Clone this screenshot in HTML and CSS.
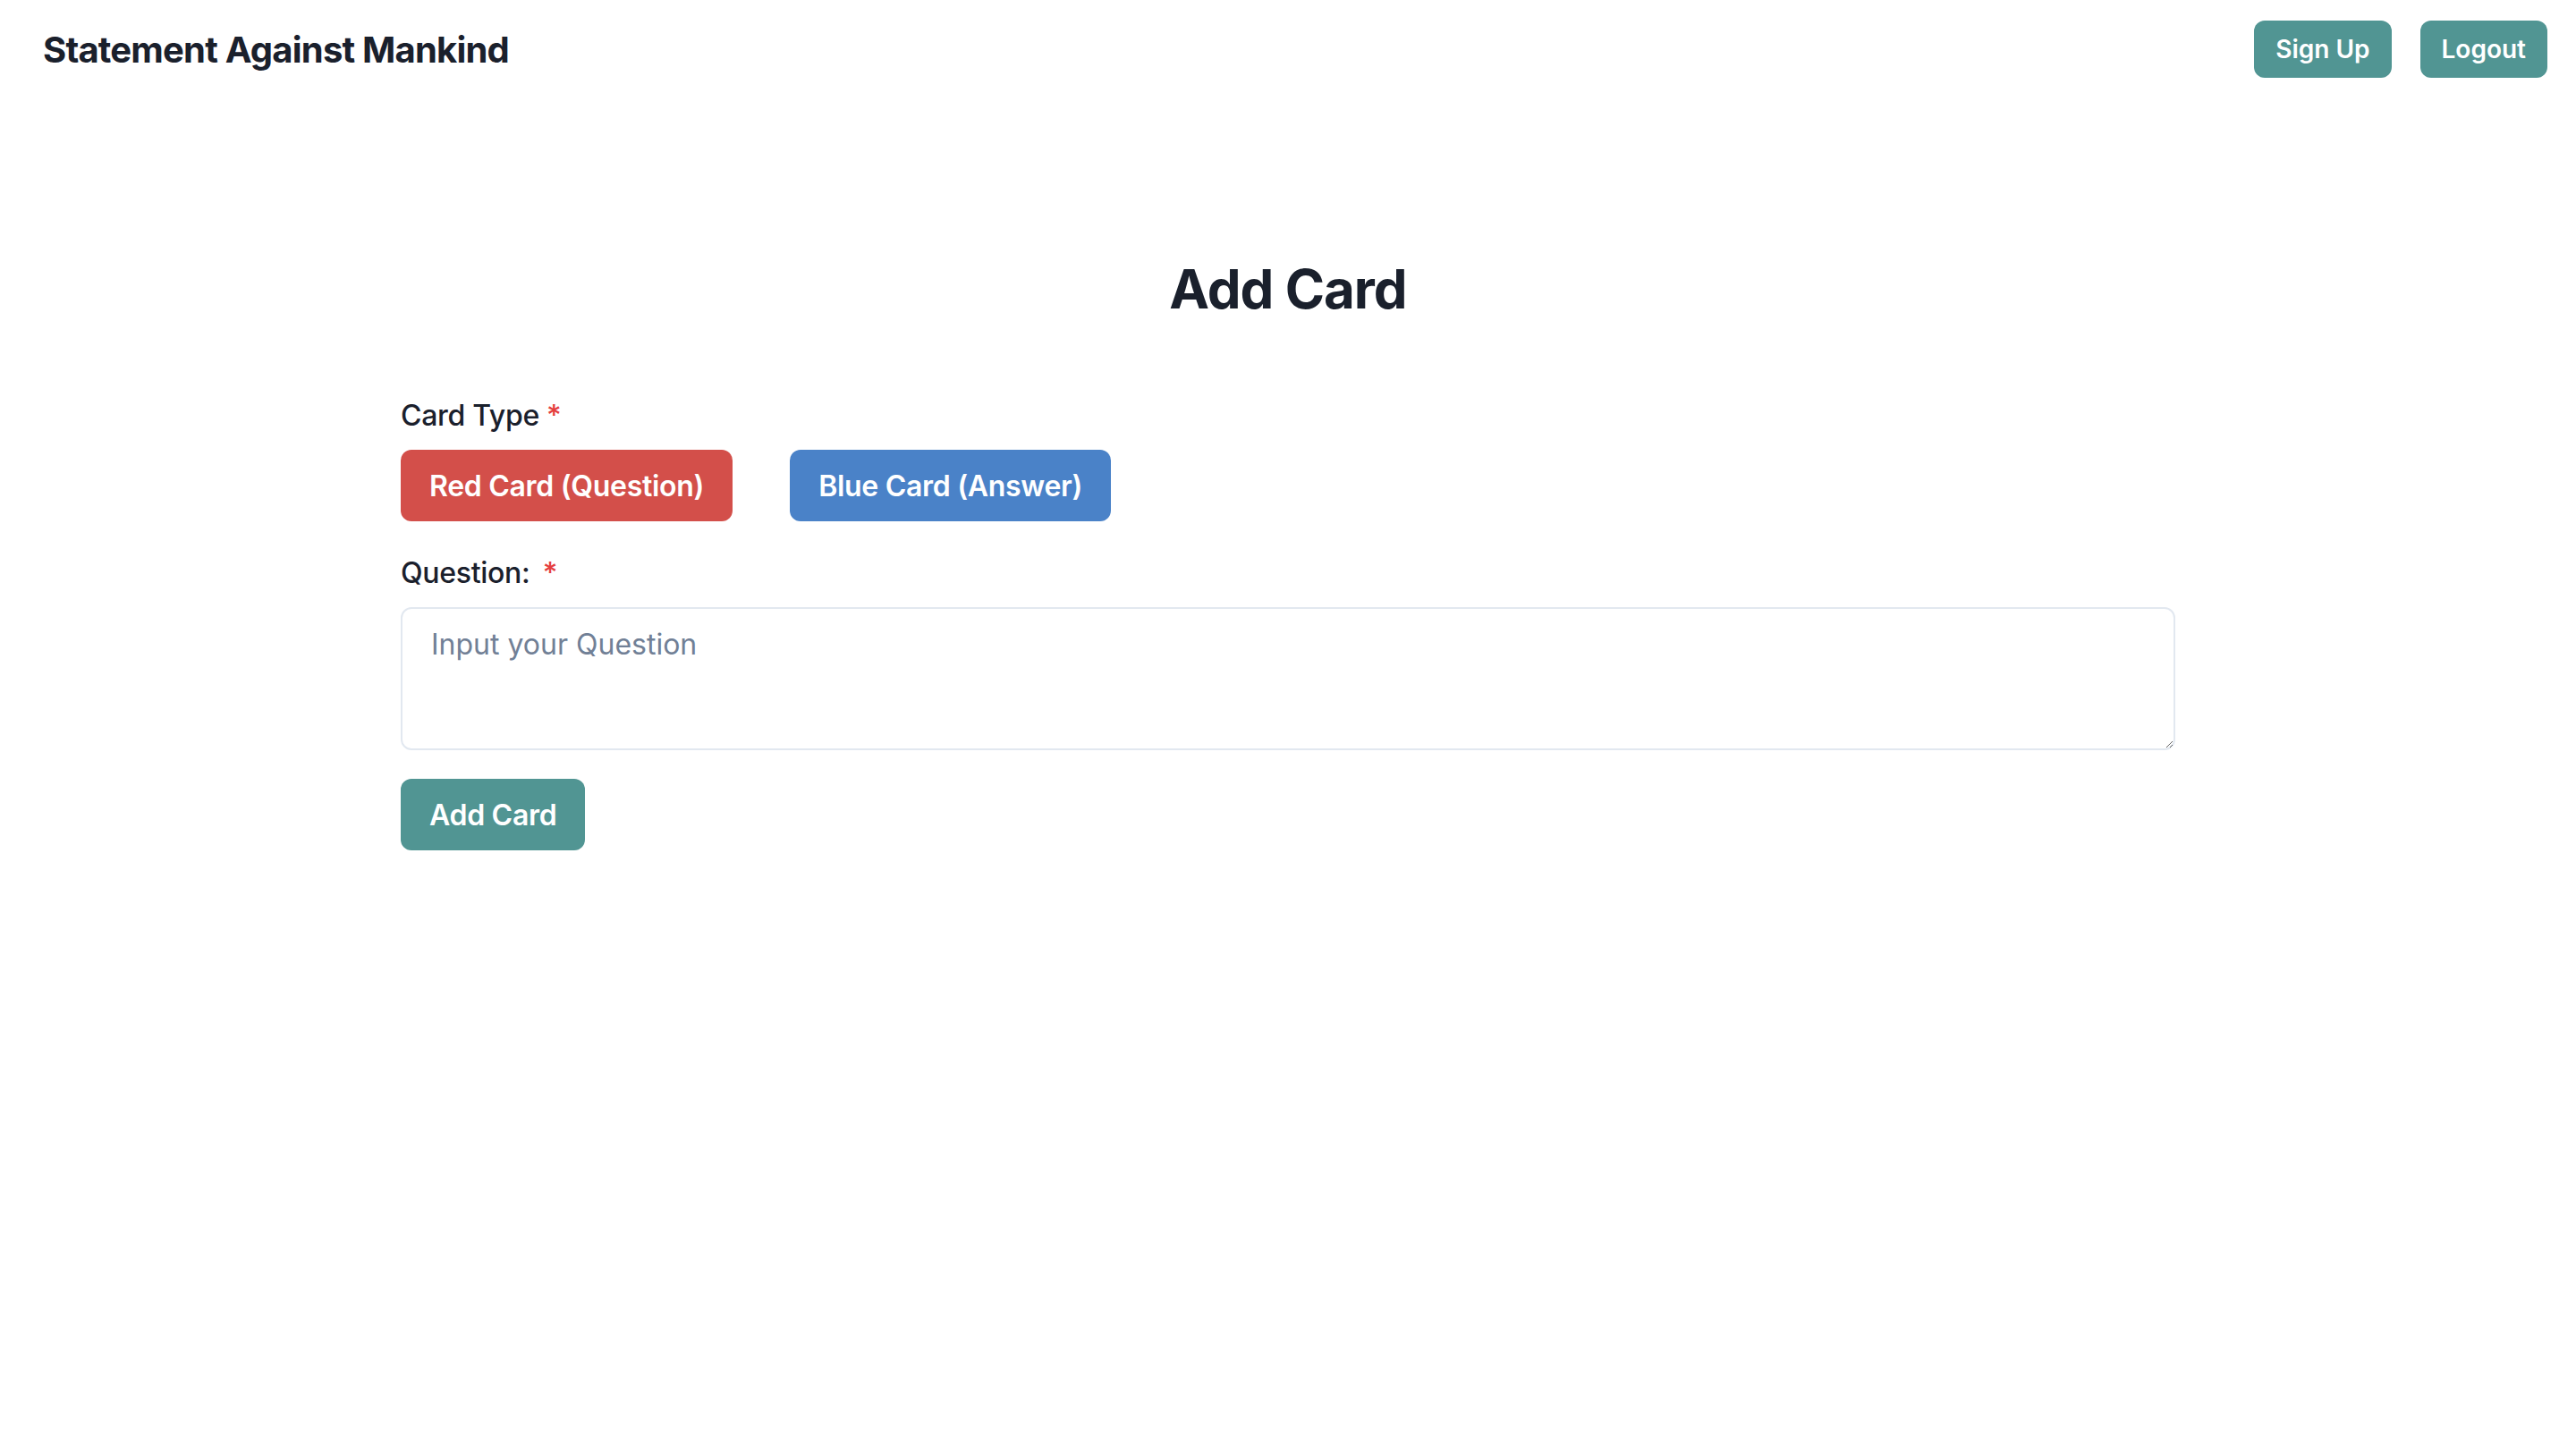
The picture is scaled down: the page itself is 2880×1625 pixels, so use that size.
FILE: index.html
```html
<!DOCTYPE html>
<html lang="en">
<head>
<meta charset="utf-8">
<title>Statement Against Mankind</title>
<link rel="stylesheet" href="styles.css">
</head>
<body>
<header class="topbar">
  <div class="brand">Statement Against Mankind</div>
  <nav class="nav">
    <button class="btn btn-sm btn-teal">Sign Up</button>
    <button class="btn btn-sm btn-teal">Logout</button>
  </nav>
</header>
<main class="page">
  <h1 class="page-title">Add Card</h1>
  <form class="form">
    <div class="field">
      <label class="label">Card Type<span class="req">*</span></label>
      <div class="type-row">
        <button type="button" class="btn btn-md btn-red">Red Card (Question)</button>
        <button type="button" class="btn btn-md btn-blue">Blue Card (Answer)</button>
      </div>
    </div>
    <div class="field">
      <label class="label" for="q">Question: <span class="req req-gap">*</span></label>
      <textarea id="q" class="textarea" placeholder="Input your Question"></textarea>
    </div>
    <div class="actions">
      <button type="button" class="btn btn-md btn-teal">Add Card</button>
    </div>
  </form>
</main>
</body>
</html>
```

FILE: styles.css
```css
* { box-sizing: border-box; }
html, body { margin: 0; padding: 0; background: #ffffff; }
body {
  font-family: Inter, "Noto Sans", "Liberation Sans", sans-serif;
  color: #1A202C;
  line-height: 1.5;
}
.topbar {
  display: flex;
  align-items: center;
  justify-content: space-between;
  height: 110px;
  padding: 0 32px 0 48px;
}
.brand {
  font-size: 40px;
  font-weight: 700;
  line-height: 1.2;
  letter-spacing: -0.8px;
  padding-top: 2px;
}
.nav { display: flex; gap: 32px; }
.btn {
  border: none;
  color: #ffffff;
  font-family: inherit;
  font-weight: 600;
  border-radius: 12px;
  cursor: pointer;
  display: inline-flex;
  align-items: center;
  justify-content: center;
  white-space: nowrap;
}
.btn-sm { height: 64px; font-size: 28px; padding: 0 24px; }
.btn-md { height: 80px; font-size: 32px; padding: 0 32px; letter-spacing: -0.3px; }
.btn-teal { background: #519593; }
.btn-red { background: #D34F4A; }
.btn-blue { background: #4A82C8; }
.page {
  width: 1984px;
  margin: 177px auto 0;
}
.page-title {
  margin: 0 0 80px;
  text-align: center;
  font-size: 60px;
  line-height: 1.2;
  font-weight: 700;
  letter-spacing: -1px;
}
.form { display: flex; flex-direction: column; gap: 32px; }
.field { display: flex; flex-direction: column; }
.label {
  font-size: 32px;
  font-weight: 500;
  line-height: 48px;
  padding-top: 2px;
  margin-bottom: 14px;
  letter-spacing: -0.3px;
}
.req { color: #E53E3E; margin-left: 8px; }
.req-gap { margin-left: 6px; }
.type-row { display: flex; gap: 64px; }
.textarea {
  width: 100%;
  height: 160px;
  border: 2px solid #E2E8F0;
  border-radius: 12px;
  padding: 16px 32px;
  font-family: inherit;
  font-size: 32px;
  line-height: 1.5;
  color: #1A202C;
  resize: vertical;
  outline: none;
}
.textarea::placeholder { color: #718096; }
.actions { display: flex; }
```
